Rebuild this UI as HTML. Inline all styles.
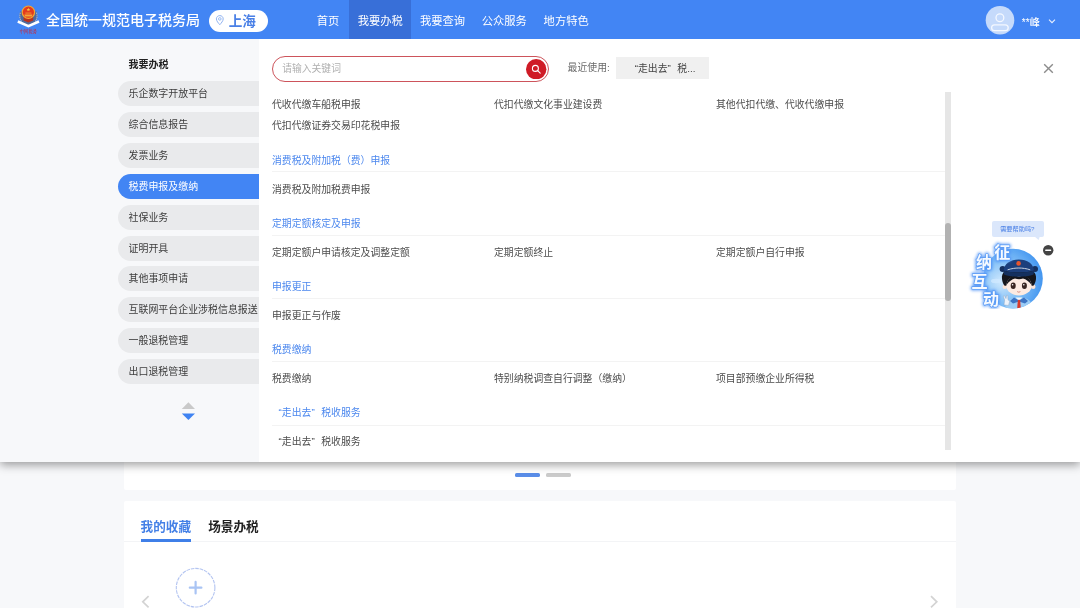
<!DOCTYPE html>
<html lang="zh-CN">
<head>
<meta charset="utf-8">
<title>全国统一规范电子税务局</title>
<style>
*{box-sizing:border-box;margin:0;padding:0}
html,body{width:1080px;height:608px;overflow:hidden;background:#f7f8fa;}
body{position:relative;font-family:"Liberation Sans","Noto Sans CJK SC",sans-serif;color:#333;font-size:9.85px;}
.abs{position:absolute}
body>.abs,body>svg{will-change:transform}
.q{display:inline-block;width:1em;position:relative;top:-1px}
.ql{text-align:right}
.qr{text-align:left}
/* underlying page */
#card1{left:124px;top:440px;width:832px;height:50.2px;background:#fff;border-radius:2px}
#card2{left:124px;top:501.2px;width:832px;height:120px;background:#fff;border-radius:2px}
#dots i{position:absolute;top:473.3px;height:4.2px;border-radius:1.6px;width:25.2px}
#tabs{left:124px;top:501.2px;width:832px;height:41px;border-bottom:1px solid #f3f4f6}
#tabs span{position:absolute;top:16px;font-size:12.6px;font-weight:bold;line-height:20px;white-space:nowrap}
/* header */
#hd{left:0;top:0;width:1080px;height:38.6px;background:#4285f4;color:#fff;z-index:5}
#hd .title{left:46px;top:1.4px;line-height:39px;font-size:14px;font-weight:500;white-space:nowrap}
#hd .loc{left:208.6px;top:10px;width:59.2px;height:21.8px;border-radius:11px;background:#fff;color:#4a80e6}
#hd .loc span{position:absolute;left:20.1px;top:0.6px;line-height:21.6px;font-size:13.6px;font-weight:700;white-space:nowrap}
#hd .nav{top:0;height:38.6px;overflow:hidden;line-height:43px;font-size:11.3px;white-space:nowrap;text-align:center}
#hd .act{background:#386fd8}
/* panel */
#panel{left:0;top:38.6px;width:1080px;height:422.6px;background:#fff;z-index:4;box-shadow:0 3px 9px rgba(0,0,0,.38)}
#side{left:0;top:0;width:259px;height:423px;background:#f7f8fa}
#side h3{position:absolute;left:128.5px;top:19.4px;font-size:10px;line-height:14px;font-weight:bold;color:#222;white-space:nowrap}
#side .it{position:absolute;left:118px;width:141px;height:25px;border-radius:12.5px 0 0 12.5px;background:#e9eaec;line-height:25px;padding-left:10.5px;font-size:9.95px;color:#3c3c3c;white-space:nowrap;overflow:hidden}
#side .it.on{background:#4285f4;color:#fff}
.search{left:272px;top:17.4px;width:277px;height:25.6px;border:1.4px solid #cd545b;border-radius:13px;background:#fff}
.search span{position:absolute;left:9.2px;top:0;line-height:23.6px;font-size:9.8px;color:#b0b0b0;white-space:nowrap}
.recent{left:567.6px;top:17px;line-height:24px;font-size:9.85px;color:#6a6a6a;white-space:nowrap}
.tag{left:616px;top:17.6px;width:93px;padding-right:1.5px;height:22.4px;background:#f0f0f0;line-height:24.6px;text-align:center;font-size:9.85px;color:#444;white-space:nowrap}
#list{left:272px;top:53.4px;width:673px;height:358px;overflow:hidden}
#list .r{position:absolute;left:0;width:673px;height:20px;line-height:20px;white-space:nowrap;color:#4c4c4c}
#list .r>span{position:absolute;top:0}
#list .h{position:absolute;left:0;width:673px;height:20px;line-height:20px;color:#4b87ee;white-space:nowrap}
#list .d{position:absolute;left:0;width:673px;height:1px;background:#f3f3f3}
#sb{left:945px;top:53.4px;width:5.5px;height:358px;background:#e6e6e6}
#sb i{position:absolute;left:0;top:131px;width:5.5px;height:78px;border-radius:3px;background:#b2b2b2}
</style>
</head>
<body>
<!-- underlying page -->
<div class="abs" id="card1"></div>
<div class="abs" id="dots"><i style="left:514.8px;background:#5a8de8"></i><i style="left:545.6px;background:#cbcbcb"></i></div>
<div class="abs" id="card2"></div>
<div class="abs" id="tabs">
  <span style="left:16.6px;color:#4480e6">我的收藏</span>
  <i class="abs" style="left:16.6px;top:38.4px;width:50.4px;height:2.4px;background:#3f7fe8"></i>
  <span style="left:84.2px;color:#222">场景办税</span>
</div>
<svg class="abs" style="left:170px;top:562px" width="50" height="50" viewBox="0 0 50 50">
  <circle cx="25.6" cy="25.7" r="19.3" fill="#fff" stroke="#b3c4f1" stroke-width="1.1" stroke-dasharray="3.6 .9"/>
  <path d="M25.6 19.9v11.600M19.800 25.7h11.600" stroke="#a9c4f4" stroke-width="2.200" stroke-linecap="round" fill="none"/>
</svg>
<svg class="abs" style="left:140px;top:594.5px" width="12" height="14" viewBox="0 0 12 14"><path d="M8.6 1.2L2.800 6.8l5.800 5.600" stroke="#d3d3d3" stroke-width="1.700" fill="none"/></svg>
<svg class="abs" style="left:928px;top:594.5px" width="12" height="14" viewBox="0 0 12 14"><path d="M3 1.2l5.800 5.600-5.800 5.600" stroke="#d3d3d3" stroke-width="1.700" fill="none"/></svg>

<!-- header -->
<div class="abs" id="hd">
  <svg class="abs" style="left:14px;top:3px" width="30" height="34" viewBox="0 0 30 34">
    <path d="M6.200 8.600c-1.600 3.600-1 7.800 1.800 10.600l6.400 3 6.400-3c2.800-2.800 3.400-7 1.800-10.600z" fill="#56627e" opacity=".75"/>
    <path d="M6.400 9.600c-1.200 3.200-.6 6.600 1.400 9M22.400 9.600c1.200 3.200.6 6.600-1.400 9" stroke="#c9d0de" stroke-width="1.100" fill="none" opacity=".8" stroke-dasharray="1.200 .8"/>
    <path d="M3.800 18.500l10.600 4.700 10.600-4.700" stroke="#fff" stroke-width="2.500" fill="none" stroke-linejoin="miter"/>
    <path d="M9.600 14h9.600v3.600l-4.800 2-4.800-2z" fill="#b8321f"/>
    <circle cx="14.400" cy="9.200" r="6.200" fill="#e33a1f" stroke="#f5a531" stroke-width="1.200"/>
    <path d="M10.400 11.600h8l-.6 2h-6.800z" fill="#f3a73a"/>
    <path d="M11.400 9.400h6v1.400h-6z" fill="#f08a2c" opacity=".8"/>
    <path d="M14.400 4.800l.5 1.300h1.300l-1 .8.400 1.300-1.200-.8-1.200.8.400-1.300-1-.8h1.300z" fill="#f8c445"/>
    <text x="14.200" y="30.400" font-size="4.500" font-weight="500" fill="#cc2536" text-anchor="middle" font-family="'Liberation Serif','Noto Serif CJK SC',serif" textLength="17.600" lengthAdjust="spacingAndGlyphs">中国税务</text>
  </svg>
  <div class="abs title">全国统一规范电子税务局</div>
  <div class="abs loc">
    <svg class="abs" style="left:5.2px;top:4.3px" width="12" height="13" viewBox="0 0 12 13"><path d="M5.8 1.6c2 0 3.4 1.5 3.4 3.3 0 2-2 4.200-3.400 5.800C4.400 9.100 2.400 6.900 2.400 4.900c0-1.800 1.400-3.300 3.400-3.300z" fill="none" stroke="#8fb2f0" stroke-width="1"/><circle cx="5.800" cy="4.900" r="1.300" fill="none" stroke="#8fb2f0" stroke-width=".9"/></svg>
    <span>上海</span>
  </div>
  <div class="abs nav" style="left:306px;width:44px">首页</div>
  <div class="abs nav act" style="left:349.4px;width:61.8px">我要办税</div>
  <div class="abs nav" style="left:411.5px;width:62px">我要查询</div>
  <div class="abs nav" style="left:473.3px;width:62px">公众服务</div>
  <div class="abs nav" style="left:535.2px;width:62px">地方特色</div>
  <svg class="abs" style="left:985px;top:5px" width="30" height="30" viewBox="0 0 30 30">
    <circle cx="15" cy="15.2" r="14.300" fill="#c5dafb"/>
    <circle cx="14.900" cy="12.700" r="3.900" fill="none" stroke="#f4f8ff" stroke-width="1.300"/>
    <rect x="6.600" y="19.800" width="16.600" height="5.800" rx="2.900" fill="none" stroke="#f4f8ff" stroke-width="1.300"/>
  </svg>
  <div class="abs" style="left:1021.8px;top:2px;line-height:41px;font-size:10.1px;font-weight:500;white-space:nowrap">**峰</div>
  <svg class="abs" style="left:1046px;top:16px" width="12" height="10" viewBox="0 0 12 10"><path d="M3 3.600l3 3 3-3" stroke="#e8f0ff" stroke-width="1.100" fill="none"/></svg>
</div>

<!-- dropdown panel -->
<div class="abs" id="panel">
  <div class="abs" id="side">
    <h3>我要办税</h3>
    <div class="it" style="top:42.4px">乐企数字开放平台</div>
    <div class="it" style="top:73.4px">综合信息报告</div>
    <div class="it" style="top:104.4px">发票业务</div>
    <div class="it on" style="top:135.4px">税费申报及缴纳</div>
    <div class="it" style="top:166.4px">社保业务</div>
    <div class="it" style="top:197.4px">证明开具</div>
    <div class="it" style="top:227.4px">其他事项申请</div>
    <div class="it" style="top:258.4px">互联网平台企业涉税信息报送</div>
    <div class="it" style="top:289.4px">一般退税管理</div>
    <div class="it" style="top:320.4px">出口退税管理</div>
    <svg class="abs" style="left:180px;top:361px" width="18" height="22" viewBox="0 0 18 22"><path d="M8.400 2.200L15 9H1.800z" fill="#c9c9c9"/><path d="M1.800 13.400H15L8.400 20z" fill="#3f83f2"/></svg>
  </div>
  <div class="abs search"><span>请输入关键词</span>
    <svg class="abs" style="right:1.2px;top:1.300px" width="20.4" height="20.4" viewBox="0 0 20.4 20.4"><circle cx="10.200" cy="10.200" r="10.200" fill="#cf1b26"/><circle cx="9.400" cy="9.400" r="3" fill="none" stroke="#fff" stroke-width="1.050"/><path d="M11.700 11.700l2.500 2.500" stroke="#fff" stroke-width="1.150" stroke-linecap="round"/></svg>
  </div>
  <div class="abs recent">最近使用:</div>
  <div class="abs tag"><span class="q ql">“</span>走出去<span class="q qr">”</span>税...</div>
  <svg class="abs" style="left:1042px;top:23.400px" width="13" height="13" viewBox="0 0 13 13"><path d="M2.200 2.200l8.600 8.600M10.800 2.200l-8.600 8.600" stroke="#8c8c8c" stroke-width="1.400" fill="none"/></svg>
  <div class="abs" id="list">
    <div class="r" style="top:3px"><span style="left:0">代收代缴车船税申报</span><span style="left:222px">代扣代缴文化事业建设费</span><span style="left:444px">其他代扣代缴、代收代缴申报</span></div>
    <div class="r" style="top:24px"><span style="left:0">代扣代缴证券交易印花税申报</span></div>
    <div class="h" style="top:59px">消费税及附加税（费）申报</div>
    <i class="d" style="top:79px"></i>
    <div class="r" style="top:88px"><span style="left:0">消费税及附加税费申报</span></div>
    <div class="h" style="top:122px">定期定额核定及申报</div>
    <i class="d" style="top:143px"></i>
    <div class="r" style="top:151px"><span style="left:0">定期定额户申请核定及调整定额</span><span style="left:222px">定期定额终止</span><span style="left:444px">定期定额户自行申报</span></div>
    <div class="h" style="top:185px">申报更正</div>
    <i class="d" style="top:206px"></i>
    <div class="r" style="top:214px"><span style="left:0">申报更正与作废</span></div>
    <div class="h" style="top:248px">税费缴纳</div>
    <i class="d" style="top:269px"></i>
    <div class="r" style="top:277px"><span style="left:0">税费缴纳</span><span style="left:222px">特别纳税调查自行调整（缴纳）</span><span style="left:444px">项目部预缴企业所得税</span></div>
    <div class="h" style="top:311px"><span class="q ql">“</span>走出去<span class="q qr">”</span>税收服务</div>
    <i class="d" style="top:333px"></i>
    <div class="r" style="top:340px"><span style="left:0"><span class="q ql">“</span>走出去<span class="q qr">”</span>税收服务</span></div>
  </div>
  <div class="abs" id="sb"><i></i></div>
  <div class="abs" id="mascot" style="left:960px;top:175px;width:100px;height:110px">
    <div class="abs" style="left:32.400px;top:7.200px;width:52px;height:16px;border-radius:2px;background:#dbe7fb"></div>
    <svg class="abs" style="left:74px;top:22px" width="8" height="5" viewBox="0 0 8 5"><path d="M0 0h6L4.600 4z" fill="#dbe7fb"/></svg>
    <div class="abs" style="left:32.400px;top:7.200px;width:52px;height:16px;line-height:16px;text-align:center;font-size:6.2px;color:#4a80e6;padding-right:2px;white-space:nowrap">需要帮助吗?</div>
    <svg class="abs" style="left:0;top:9.4px" width="100" height="86" viewBox="0 0 100 86">
      <defs>
        <radialGradient id="mg" cx="0.300" cy="0.550" r="0.800">
          <stop offset="0" stop-color="#cfe8fd"/><stop offset=".45" stop-color="#84c1f7"/><stop offset="1" stop-color="#3089ee"/>
        </radialGradient>
        <filter id="glow" x="-30%" y="-30%" width="160%" height="160%"><feGaussianBlur stdDeviation="1.600"/></filter>
        <clipPath id="mc"><circle cx="53" cy="55.600" r="29.800"/></clipPath>
      </defs>
      <circle cx="53" cy="55.600" r="29.800" fill="url(#mg)"/>
      <ellipse cx="36" cy="58" rx="5" ry="2.200" fill="#cfe9ff" opacity=".8"/>
      <g clip-path="url(#mc)">
        <path d="M45 86c.6-7 4-11.600 14-11.600S72.400 79 73 86z" fill="#9ccdf6"/>
        <path d="M50 78l4-3.400 5 3 5-3 4 3.400-3 2.600-6-2-6 2z" fill="#3d74c4"/>
        <path d="M55.600 74.600l3.400 3 3.400-3z" fill="#f4f8fc"/>
        <path d="M57.800 77.400l1.200-1 1.200 1 .6 8h-3.600z" fill="#d8392a"/>
      </g>
      <circle cx="44.800" cy="63.700" r="2.300" fill="#fbe3d6"/>
      <circle cx="73.200" cy="63.700" r="2.300" fill="#fbe3d6"/>
      <path d="M42 56c-1-7 5-12 17-12s18 5 17 12c-.4 3-1.400 5.400-2.600 6.800H44.600C43.400 61.400 42.400 59 42 56z" fill="#15161c"/>
      <ellipse cx="59" cy="62.400" rx="12.600" ry="10.200" fill="#fdebe2"/>
      <path d="M46.400 62c.6-5 3.600-8.600 8-9.600l4.600 1 4.600-1c4.400 1 7.400 4.600 8 9.600-2.600-3.600-5.600-5.600-8.600-6.400-2.600.8-5.400.8-8 0-3 .8-6 2.800-8.600 6.400z" fill="#15161c"/>
      <circle cx="42.600" cy="46" r="3" fill="#16305f"/>
      <circle cx="75" cy="46" r="3" fill="#16305f"/>
      <path d="M43.600 47.600c.6-7 6.600-11.200 15.200-11.200S73.400 40.600 74 47.600c-6 2.600-24.400 2.600-30.400 0z" fill="#1c3f7c"/>
      <path d="M43.200 47.200c7 3 24.200 3 31.200 0l-.8 4.400c-7 3-22.600 3-29.600 0z" fill="#14305f"/>
      <path d="M47.600 46.800c7.600-2.400 15-2.400 22.600 0" stroke="#c5cfdf" stroke-width="1" fill="none"/>
      <circle cx="58.600" cy="40.400" r="2.300" fill="#e8552c"/>
      <ellipse cx="53.200" cy="62.800" rx="2.500" ry="3.200" fill="#3a2622"/>
      <ellipse cx="64.400" cy="62.800" rx="2.500" ry="3.200" fill="#3a2622"/>
      <circle cx="52.600" cy="61.800" r=".8" fill="#fff"/>
      <circle cx="63.800" cy="61.800" r=".8" fill="#fff"/>
      <path d="M57.200 68.600q1.600 1.200 3.200 0" stroke="#c9685a" stroke-width=".7" fill="none"/>
      <path d="M44 82l.6-5-1.400-4 1.200-.4 1.600 3 .6-3.400 1.200.2.200 4 1.600 2-1 4z" fill="#eef3fa" stroke="#8fa8c8" stroke-width=".5"/>
      <g font-family="'Liberation Sans','Noto Sans CJK SC',sans-serif" font-weight="bold" font-size="16" text-anchor="middle">
        <g fill="#4a90f5" stroke="#4a90f5" stroke-width="3" filter="url(#glow)" stroke-linejoin="round" opacity=".85">
          <text x="42.200" y="34.600">征</text><text x="24" y="44.600">纳</text><text x="19.400" y="63.800">互</text><text x="31" y="82">动</text>
        </g>
        <g fill="#f6faff" stroke="#5c9cf6" stroke-width="1.400" paint-order="stroke" stroke-linejoin="round">
          <text x="42.200" y="34.600">征</text><text x="24" y="44.600">纳</text><text x="19.400" y="63.800">互</text><text x="31" y="82">动</text>
        </g>
      </g>
    </svg>
    <svg class="abs" style="left:82px;top:30px" width="12" height="12" viewBox="0 0 12 12"><circle cx="6.200" cy="6.200" r="5.200" fill="#444"/><rect x="3.200" y="5.400" width="6" height="1.600" rx=".5" fill="#fff"/></svg>
  </div>
</div>
</body>
</html>
